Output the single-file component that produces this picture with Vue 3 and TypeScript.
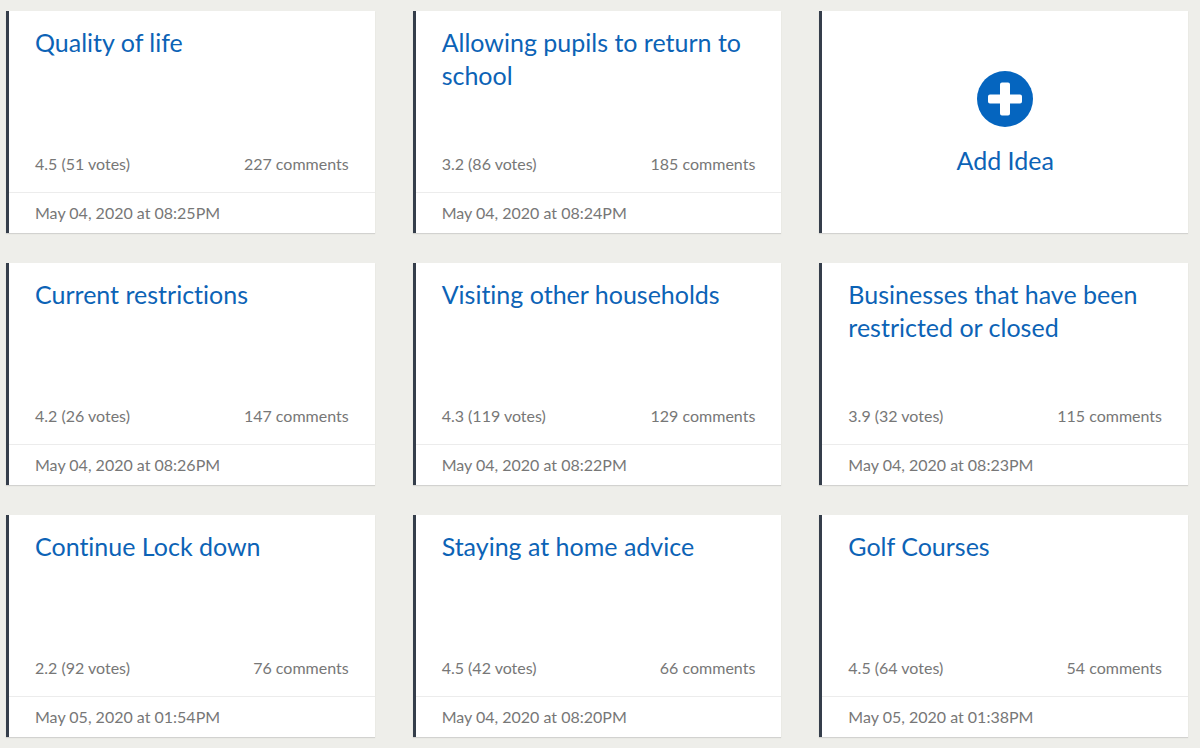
<script setup lang="ts">
interface Idea {
  title: string
  rating: string
  votes: number
  comments: number
  posted: string
}

const leading: Idea[] = [
  { title: 'Quality of life', rating: '4.5', votes: 51, comments: 227, posted: 'May 04, 2020 at 08:25PM' },
  { title: 'Allowing pupils to return to school', rating: '3.2', votes: 86, comments: 185, posted: 'May 04, 2020 at 08:24PM' },
]
const rest: Idea[] = [
  { title: 'Current restrictions', rating: '4.2', votes: 26, comments: 147, posted: 'May 04, 2020 at 08:26PM' },
  { title: 'Visiting other households', rating: '4.3', votes: 119, comments: 129, posted: 'May 04, 2020 at 08:22PM' },
  { title: 'Businesses that have been restricted or closed', rating: '3.9', votes: 32, comments: 115, posted: 'May 04, 2020 at 08:23PM' },
  { title: 'Continue Lock down', rating: '2.2', votes: 92, comments: 76, posted: 'May 05, 2020 at 01:54PM' },
  { title: 'Staying at home advice', rating: '4.5', votes: 42, comments: 66, posted: 'May 04, 2020 at 08:20PM' },
  { title: 'Golf Courses', rating: '4.5', votes: 64, comments: 54, posted: 'May 05, 2020 at 01:38PM' },
]
const cards: (Idea | null)[] = [...leading, null, ...rest]
</script>

<template>
  <main class="board">
    <template v-for="(idea, i) in cards" :key="i">
      <article v-if="idea" class="card">
        <div class="body">
          <h2 class="title"><a href="#">{{ idea.title }}</a></h2>
          <div class="stats">
            <span>{{ idea.rating }} ({{ idea.votes }} votes)</span>
            <span>{{ idea.comments }} comments</span>
          </div>
        </div>
        <footer class="date">{{ idea.posted }}</footer>
      </article>
      <a v-else class="card add" href="#">
        <svg class="plus" viewBox="0 0 56 56" aria-hidden="true">
          <circle cx="28" cy="28" r="28" fill="#0565bf" />
          <path d="M25 11.5h6q2 0 2 2v10h10q2 0 2 2v5q0 2-2 2h-10v10q0 2-2 2h-6q-2 0-2-2v-10h-10q-2 0-2-2v-5q0-2 2-2h10v-10q0-2 2-2z" fill="#fff" />
        </svg>
        <span>Add Idea</span>
      </a>
    </template>
  </main>
</template>

<style>
body {
  margin: 0;
  background: #eeeeea;
}
</style>

<style scoped>
.board {
  display: grid;
  grid-template-columns: repeat(3, 1fr);
  gap: 30px 38px;
  padding: 11px 12px 11px 6px;
  font-family: Lato, "Liberation Sans", sans-serif;
  font-size: 16px;
  font-variant-ligatures: none;
  line-height: 24px;
  color: #777;
}
.card {
  display: flex;
  flex-direction: column;
  box-sizing: border-box;
  min-height: 222px;
  background: #fff;
  border-left: 3px solid #353e4b;
  box-shadow: 0 1px 1px #d2d2d0;
}
.body {
  display: flex;
  flex: 1;
  flex-direction: column;
  justify-content: space-between;
  padding: 15px 26px 16px;
}
.title {
  margin: 0;
  font-size: 25px;
  font-weight: 400;
  line-height: 33px;
}
.title a {
  color: #0c63b6;
  text-decoration: none;
}
.stats {
  display: flex;
  justify-content: space-between;
}
.date {
  padding: 8px 26px;
  border-top: 1px solid #ececec;
}
.add {
  align-items: center;
  justify-content: center;
  gap: 17px;
  padding-top: 4px;
  color: #0c63b6;
  font-size: 25px;
  line-height: 33px;
  text-decoration: none;
}
.plus {
  width: 56px;
  height: 56px;
}
</style>
